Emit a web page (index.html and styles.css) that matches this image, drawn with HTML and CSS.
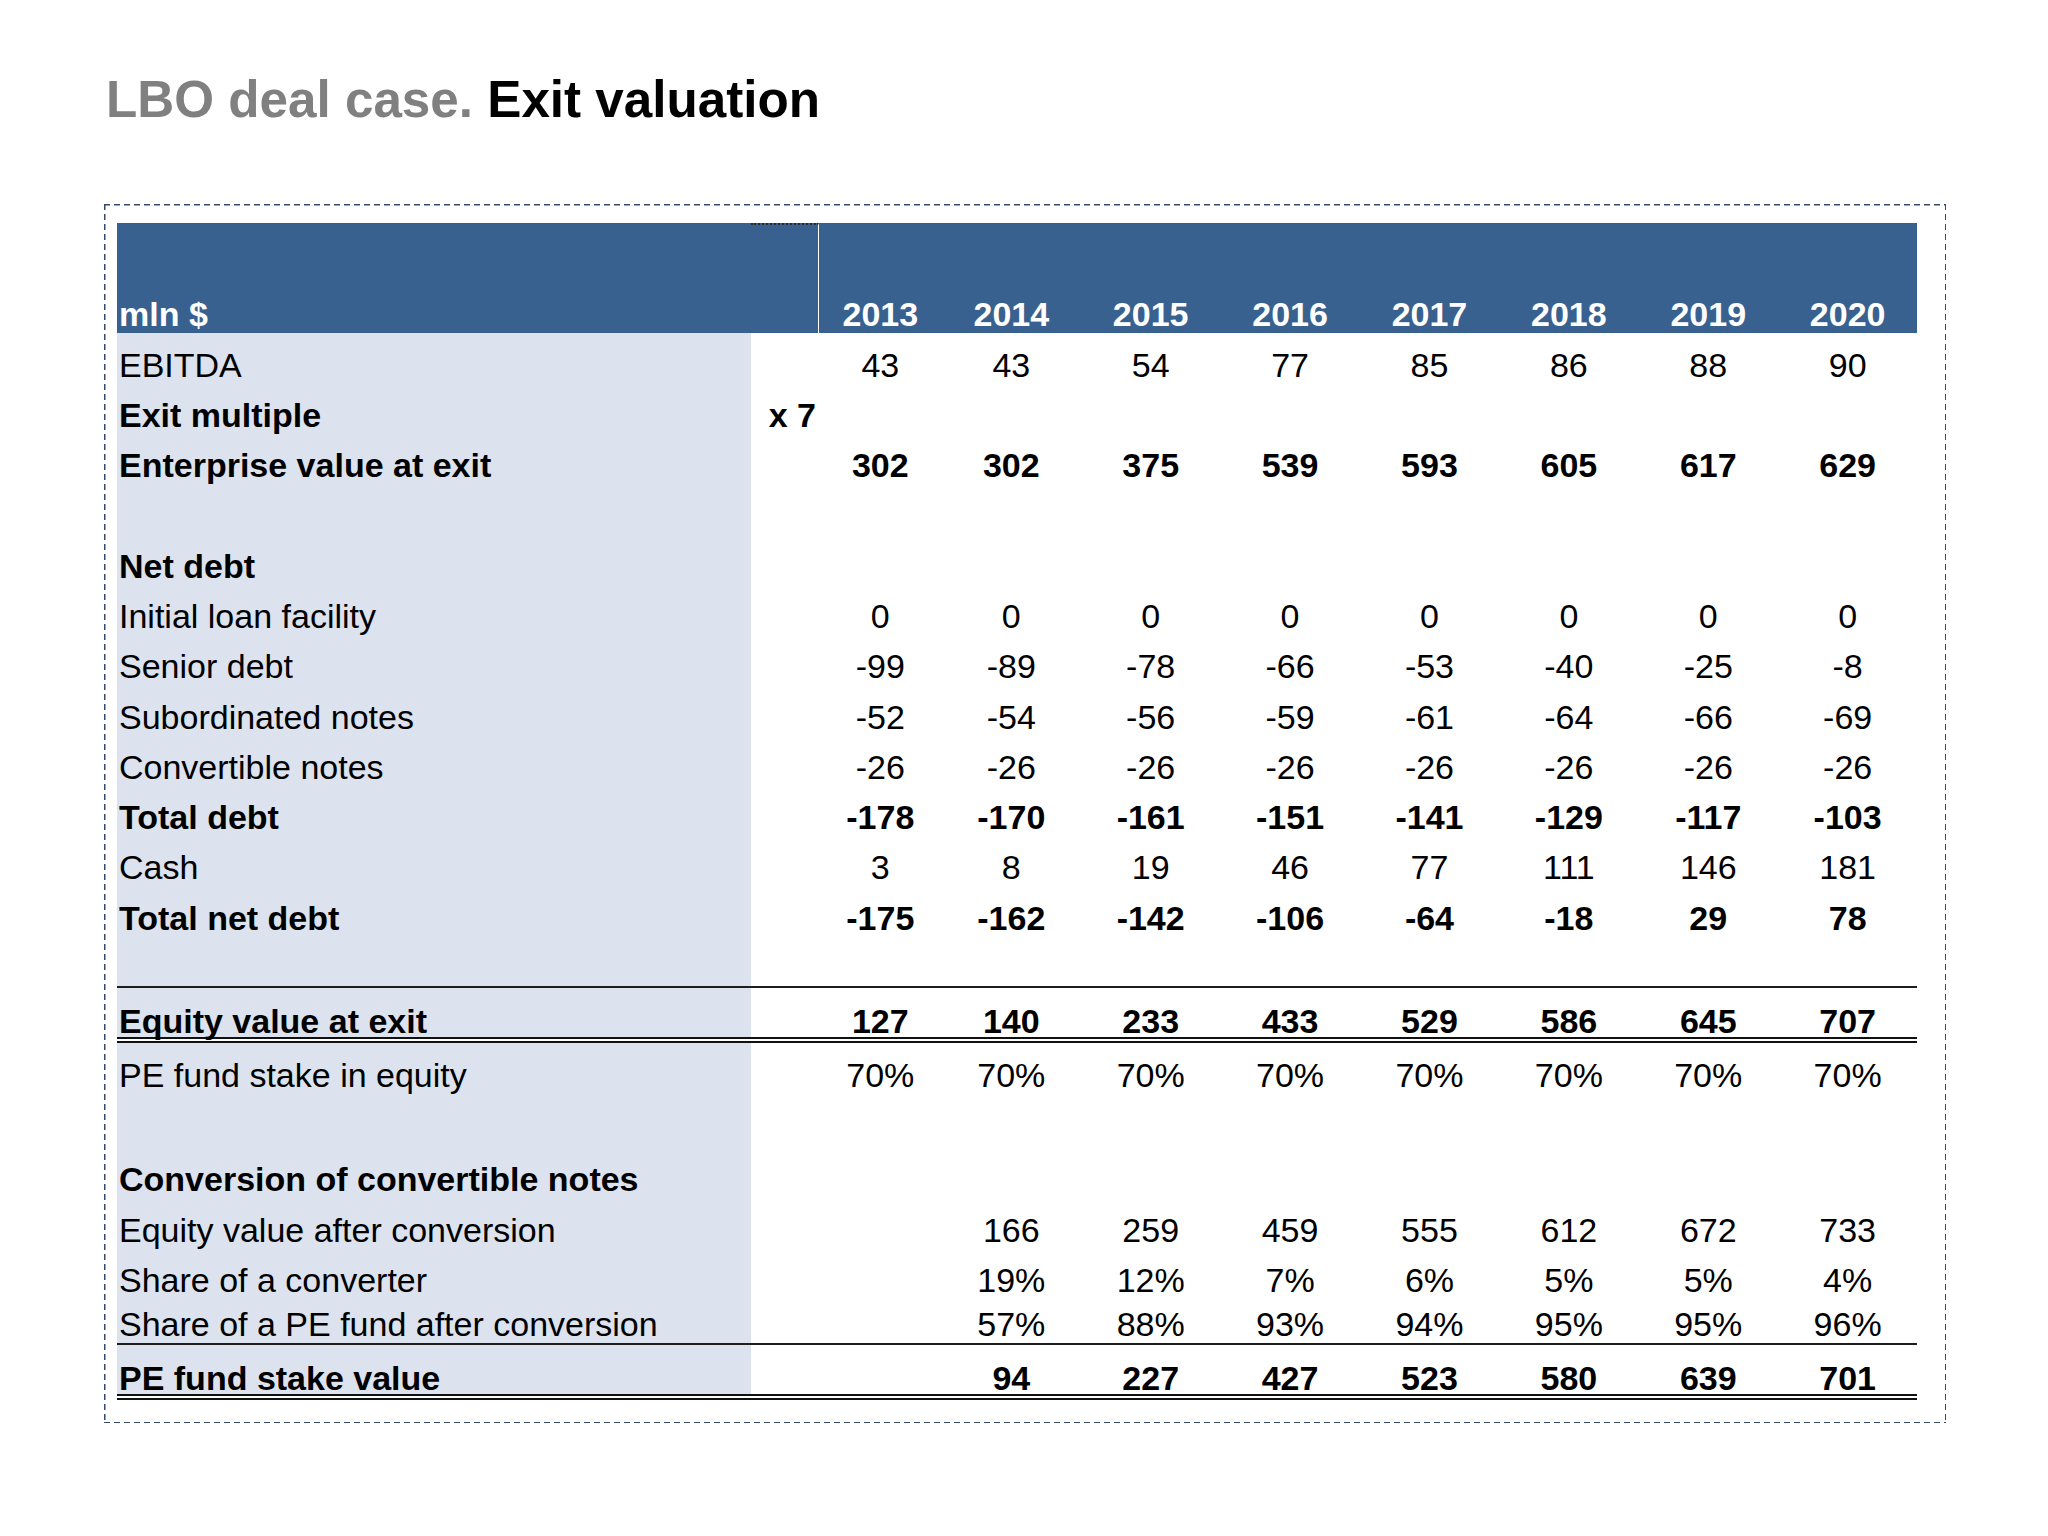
FILE: index.html
```html
<!DOCTYPE html>
<html>
<head>
<meta charset="utf-8">
<title>LBO deal case. Exit valuation</title>
<link rel="stylesheet" href="styles.css">
</head>
<body>
<div class="page">
  <h1 class="title"><span class="title-grey">LBO deal case.</span> Exit valuation</h1>
  <div class="frame">
    <div class="table">
      <div class="row head">
        <div class="cell label">mln $</div>
        <div class="cell mult"></div>
        <div class="cell num">2013</div><div class="cell num">2014</div><div class="cell num">2015</div><div class="cell num">2016</div><div class="cell num">2017</div><div class="cell num">2018</div><div class="cell num">2019</div><div class="cell num">2020</div>
      </div>

      <div class="row r50">
        <div class="cell label">EBITDA</div><div class="cell mult"></div>
        <div class="cell num">43</div><div class="cell num">43</div><div class="cell num">54</div><div class="cell num">77</div><div class="cell num">85</div><div class="cell num">86</div><div class="cell num">88</div><div class="cell num">90</div>
      </div>
      <div class="row r50 bold">
        <div class="cell label">Exit multiple</div><div class="cell mult">x 7</div>
        <div class="cell num"></div><div class="cell num"></div><div class="cell num"></div><div class="cell num"></div><div class="cell num"></div><div class="cell num"></div><div class="cell num"></div><div class="cell num"></div>
      </div>
      <div class="row r50 bold">
        <div class="cell label">Enterprise value at exit</div><div class="cell mult"></div>
        <div class="cell num">302</div><div class="cell num">302</div><div class="cell num">375</div><div class="cell num">539</div><div class="cell num">593</div><div class="cell num">605</div><div class="cell num">617</div><div class="cell num">629</div>
      </div>
      <div class="row r50">
        <div class="cell label"></div>
      </div>
      <div class="row r50 bold">
        <div class="cell label">Net debt</div>
      </div>
      <div class="row r50">
        <div class="cell label">Initial loan facility</div><div class="cell mult"></div>
        <div class="cell num">0</div><div class="cell num">0</div><div class="cell num">0</div><div class="cell num">0</div><div class="cell num">0</div><div class="cell num">0</div><div class="cell num">0</div><div class="cell num">0</div>
      </div>
      <div class="row r50">
        <div class="cell label">Senior debt</div><div class="cell mult"></div>
        <div class="cell num">-99</div><div class="cell num">-89</div><div class="cell num">-78</div><div class="cell num">-66</div><div class="cell num">-53</div><div class="cell num">-40</div><div class="cell num">-25</div><div class="cell num">-8</div>
      </div>
      <div class="row r50">
        <div class="cell label">Subordinated notes</div><div class="cell mult"></div>
        <div class="cell num">-52</div><div class="cell num">-54</div><div class="cell num">-56</div><div class="cell num">-59</div><div class="cell num">-61</div><div class="cell num">-64</div><div class="cell num">-66</div><div class="cell num">-69</div>
      </div>
      <div class="row r50">
        <div class="cell label">Convertible notes</div><div class="cell mult"></div>
        <div class="cell num">-26</div><div class="cell num">-26</div><div class="cell num">-26</div><div class="cell num">-26</div><div class="cell num">-26</div><div class="cell num">-26</div><div class="cell num">-26</div><div class="cell num">-26</div>
      </div>
      <div class="row r50 bold">
        <div class="cell label">Total debt</div><div class="cell mult"></div>
        <div class="cell num">-178</div><div class="cell num">-170</div><div class="cell num">-161</div><div class="cell num">-151</div><div class="cell num">-141</div><div class="cell num">-129</div><div class="cell num">-117</div><div class="cell num">-103</div>
      </div>
      <div class="row r50">
        <div class="cell label">Cash</div><div class="cell mult"></div>
        <div class="cell num">3</div><div class="cell num">8</div><div class="cell num">19</div><div class="cell num">46</div><div class="cell num">77</div><div class="cell num">111</div><div class="cell num">146</div><div class="cell num">181</div>
      </div>
      <div class="row r50 bold">
        <div class="cell label">Total net debt</div><div class="cell mult"></div>
        <div class="cell num">-175</div><div class="cell num">-162</div><div class="cell num">-142</div><div class="cell num">-106</div><div class="cell num">-64</div><div class="cell num">-18</div><div class="cell num">29</div><div class="cell num">78</div>
      </div>
      <div class="row r49">
        <div class="cell label"></div>
      </div>
      <div class="row total bold equity">
        <div class="cell label">Equity value at exit</div><div class="cell mult"></div>
        <div class="cell num">127</div><div class="cell num">140</div><div class="cell num">233</div><div class="cell num">433</div><div class="cell num">529</div><div class="cell num">586</div><div class="cell num">645</div><div class="cell num">707</div>
      </div>
      <div class="row r51">
        <div class="cell label">PE fund stake in equity</div><div class="cell mult"></div>
        <div class="cell num">70%</div><div class="cell num">70%</div><div class="cell num">70%</div><div class="cell num">70%</div><div class="cell num">70%</div><div class="cell num">70%</div><div class="cell num">70%</div><div class="cell num">70%</div>
      </div>
      <div class="row r53">
        <div class="cell label"></div>
      </div>
      <div class="row r51 bold">
        <div class="cell label">Conversion of convertible notes</div>
      </div>
      <div class="row r51">
        <div class="cell label">Equity value after conversion</div><div class="cell mult"></div>
        <div class="cell num"></div><div class="cell num">166</div><div class="cell num">259</div><div class="cell num">459</div><div class="cell num">555</div><div class="cell num">612</div><div class="cell num">672</div><div class="cell num">733</div>
      </div>
      <div class="row r50b">
        <div class="cell label">Share of a converter</div><div class="cell mult"></div>
        <div class="cell num"></div><div class="cell num">19%</div><div class="cell num">12%</div><div class="cell num">7%</div><div class="cell num">6%</div><div class="cell num">5%</div><div class="cell num">5%</div><div class="cell num">4%</div>
      </div>
      <div class="row r44">
        <div class="cell label">Share of a PE fund after conversion</div><div class="cell mult"></div>
        <div class="cell num"></div><div class="cell num">57%</div><div class="cell num">88%</div><div class="cell num">93%</div><div class="cell num">94%</div><div class="cell num">95%</div><div class="cell num">95%</div><div class="cell num">96%</div>
      </div>
      <div class="row total bold stake">
        <div class="cell label">PE fund stake value</div><div class="cell mult"></div>
        <div class="cell num"></div><div class="cell num">94</div><div class="cell num">227</div><div class="cell num">427</div><div class="cell num">523</div><div class="cell num">580</div><div class="cell num">639</div><div class="cell num">701</div>
      </div>
    </div>
  </div>
</div>
</body>
</html>
```

FILE: styles.css
```css
html, body {
  margin: 0;
  padding: 0;
  background: #ffffff;
}

body {
  font-family: "Liberation Sans", Arial, sans-serif;
  color: #000000;
}

.page {
  padding: 70px 0 0 104px;
}

.title {
  margin: 0 0 0 2px;
  font-size: 51.2px;
  line-height: 60px;
  font-weight: bold;
  color: #000000;
  letter-spacing: 0;
}

.title-grey {
  color: #808080;
}

.frame {
  box-sizing: border-box;
  margin-top: 74px;
  width: 1842px;
  height: 1219px;
  padding: 19px 29px 0 13px;
  background-image:
    repeating-linear-gradient(90deg, #34496b 0 6px, transparent 6px 10px),
    repeating-linear-gradient(90deg, #34496b 0 6px, transparent 6px 10px),
    repeating-linear-gradient(180deg, #34496b 0 6px, transparent 6px 10px),
    repeating-linear-gradient(180deg, #34496b 0 6px, transparent 6px 10px);
  background-size: 100% 1.5px, 100% 1.5px, 1.5px 100%, 1.5px 100%;
  background-position: left top, left bottom, left top, right top;
  background-repeat: no-repeat;
}

.table {
  width: 1800px;
}

.row {
  box-sizing: border-box;
  display: grid;
  grid-template-columns: 634px 68px 122.6px repeat(7, 139.4px);
  align-items: stretch;
  font-size: 34px;
}

.cell {
  box-sizing: border-box;
  display: flex;
  align-items: flex-end;
  line-height: 34px;
  padding-bottom: 1.8px;
  white-space: nowrap;
}

.label {
  padding-left: 2px;
  background: #dce3ef;
}

.mult {
  justify-content: flex-end;
  padding-right: 3px;
}

.num {
  justify-content: center;
}

.bold {
  font-weight: bold;
}

.head {
  height: 110px;
  background: #38618f;
  color: #ffffff;
  font-weight: bold;
}

.head .label {
  background: transparent;
}

.head .mult {
  border-top: 2px dotted #2a2a2a;
  border-right: 1.5px solid #ffffff;
}

.r44 { height: 44px; }
.r49 { height: 49.4px; }
.r50 { height: 50.3px; }
.r50b { height: 50px; }
.r51 { height: 51px; }
.r53 { height: 53px; }

.total {
  border-top: 2px solid #1e1e1e;
  border-bottom: 6px double #111111;
}

.equity {
  height: 57px;
}

.equity .cell {
  padding-bottom: 0;
  line-height: 32px;
}

.stake {
  height: 57px;
}

.stake .cell {
  padding-bottom: 0;
  line-height: 31px;
}
```
